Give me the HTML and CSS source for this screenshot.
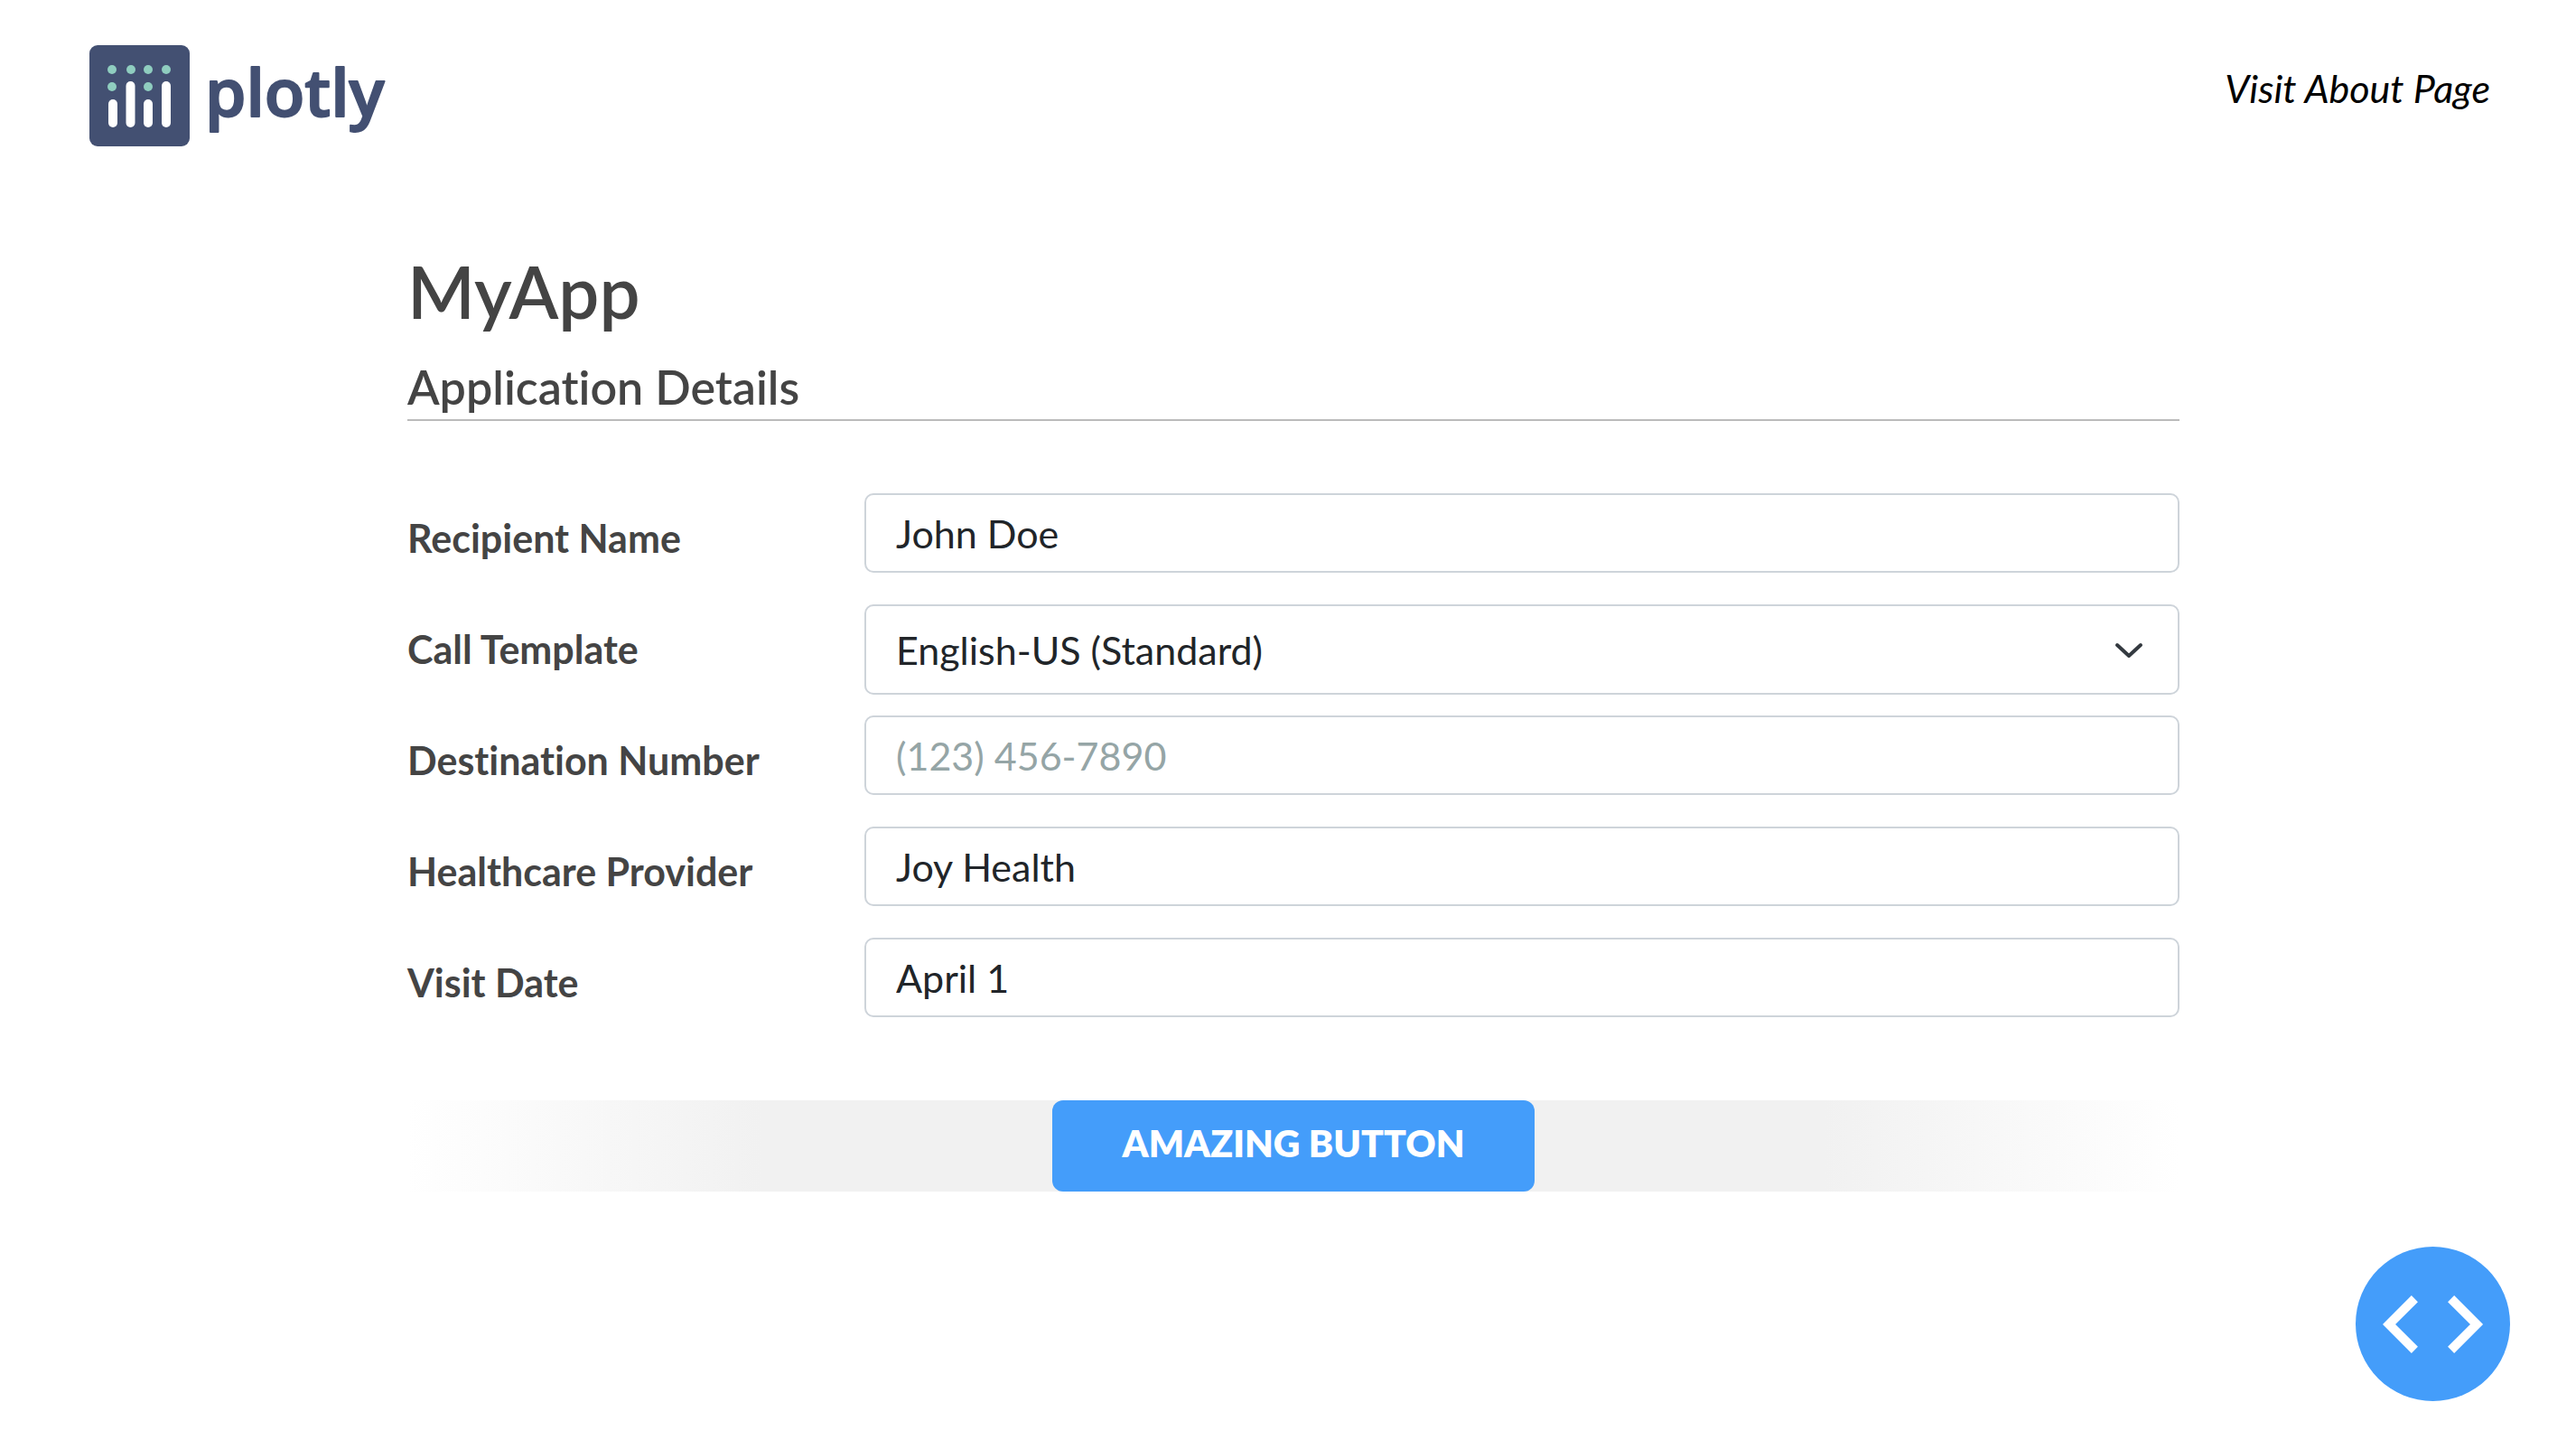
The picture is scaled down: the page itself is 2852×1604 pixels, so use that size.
FILE: index.html
```html
<!DOCTYPE html>
<html lang="en">
<head>
  <meta charset="utf-8">
  <meta name="viewport" content="width=device-width, initial-scale=1">
  <title>MyApp</title>
  <link rel="stylesheet" href="styles.css">
</head>
<body>
  <header class="header">
    <a class="logo" href="#" aria-label="plotly">
      <svg class="logo-art" viewBox="0 0 336 112" aria-hidden="true">
        <rect width="111" height="112" rx="9" fill="#435072"/>
        <g fill="#8fcdbf">
          <circle cx="25" cy="27" r="5"/>
          <circle cx="46" cy="27" r="5"/>
          <circle cx="65" cy="27" r="5"/>
          <circle cx="85" cy="27" r="5"/>
          <circle cx="25" cy="46" r="5"/>
          <circle cx="65" cy="46" r="5"/>
        </g>
        <g fill="#fff">
          <rect x="21" y="60" width="10" height="31" rx="5"/>
          <rect x="40.500" y="40" width="10" height="51" rx="5"/>
          <rect x="60" y="60" width="10" height="31" rx="5"/>
          <rect x="80" y="40" width="10" height="51" rx="5"/>
        </g>
        <text class="logo-word" x="128" y="79">plotly</text>
      </svg>
    </a>
    <a class="about" href="#">Visit About Page</a>
  </header>

  <main class="main">
    <h1 class="title">MyApp</h1>
    <h2 class="subtitle">Application Details</h2>

    <form class="form">
      <div class="row">
        <label class="label" for="recipient">Recipient Name</label>
        <input class="control" id="recipient" type="text" value="John Doe">
      </div>
      <div class="row">
        <label class="label" for="template">Call Template</label>
        <div class="select-wrap">
          <select class="control select" id="template">
            <option>English-US (Standard)</option>
          </select>
          <svg class="chevron" viewBox="0 0 16 16" aria-hidden="true">
            <path d="M1.500 5l6.500 6 6.500-6" fill="none" stroke="#343a40" stroke-width="2" stroke-linecap="round" stroke-linejoin="round"/>
          </svg>
        </div>
      </div>
      <div class="row">
        <label class="label" for="destination">Destination Number</label>
        <input class="control" id="destination" type="tel" placeholder="(123) 456-7890">
      </div>
      <div class="row">
        <label class="label" for="provider">Healthcare Provider</label>
        <input class="control" id="provider" type="text" value="Joy Health">
      </div>
      <div class="row">
        <label class="label" for="visit">Visit Date</label>
        <input class="control" id="visit" type="text" value="April 1">
      </div>
      <div class="actions">
        <button class="submit" type="button">AMAZING BUTTON</button>
      </div>
    </form>
  </main>

  <button class="code-toggle" type="button" aria-label="Show code">
    <svg class="code-icon" viewBox="0 0 112 64" aria-hidden="true">
      <path d="M35.400 3.600L7 32l28.400 28.400M75.600 3.600L104 32l-28.400 28.400" fill="none" stroke="#fff" stroke-width="10"/>
    </svg>
  </button>
</body>
</html>
```
FILE: styles.css
```css
* {
  box-sizing: border-box;
}

body {
  margin: 0;
  background: #fff;
  color: #444;
  font-family: Lato, "Liberation Sans", sans-serif;
  font-variant-ligatures: none;
}

.header {
  display: flex;
  justify-content: space-between;
  align-items: flex-start;
  padding: 50px 95px 0 99px;
}

.logo,
.logo-art {
  display: block;
}

.logo-art {
  width: 336px;
  height: 112px;
  overflow: visible;
}

.logo-word {
  font-family: "Open Sans", sans-serif;
  font-size: 73px;
  font-weight: 600;
  fill: #435072;
  stroke: #435072;
  stroke-width: 2px;
  stroke-linejoin: round;
}

.about {
  margin-top: 24px;
  color: #000;
  font-size: 43px;
  font-style: italic;
  line-height: 48px;
  text-decoration: none;
}

.main {
  padding: 112px 439px 0 451px;
}

.title,
.subtitle {
  margin: 0;
  font-weight: 600;
}

.title {
  font-size: 80px;
  line-height: 96px;
}

.subtitle {
  margin-top: 26px;
  padding-bottom: 4px;
  border-bottom: 2px solid #bbb;
  font-size: 52px;
  line-height: 64px;
}

.form {
  display: flex;
  flex-direction: column;
  gap: 23px;
  margin-top: 80px;
}

.row {
  display: grid;
  grid-template-columns: 506px 1fr;
  min-height: 100px;
}

.label {
  align-self: center;
  font-size: 43px;
  font-weight: 700;
  line-height: 56px;
}

.control {
  width: 100%;
  height: 88px;
  padding: 0 33px;
  border: 2px solid #ced4da;
  border-radius: 10px;
  background: #fff;
  color: #212529;
  font-family: inherit;
  font-size: 43px;
  font-variant-ligatures: none;
}

.control::placeholder {
  color: #95a5a6;
  opacity: 1;
}

.select-wrap {
  position: relative;
}

.select {
  height: 100px;
  appearance: none;
}

.chevron {
  position: absolute;
  top: 35px;
  right: 40px;
  width: 32px;
  height: 32px;
  pointer-events: none;
}

.actions {
  display: flex;
  justify-content: center;
  margin-top: 57px;
  background: linear-gradient(90deg, #fff, #f1f1f1 20%, #f1f1f1 80%, #fff);
}

.submit {
  width: 534px;
  height: 101px;
  padding: 0 0 6px;
  border: 0;
  border-radius: 12px;
  background: #449dfa;
  color: #fff;
  font-family: inherit;
  font-size: 41px;
  font-weight: 800;
}

.code-toggle {
  position: fixed;
  right: 73px;
  bottom: 53px;
  display: grid;
  place-items: center;
  width: 171px;
  height: 171px;
  padding: 0;
  border: 0;
  border-radius: 50%;
  background: #449dfa;
}

.code-icon {
  width: 112px;
  height: 64px;
}
```
